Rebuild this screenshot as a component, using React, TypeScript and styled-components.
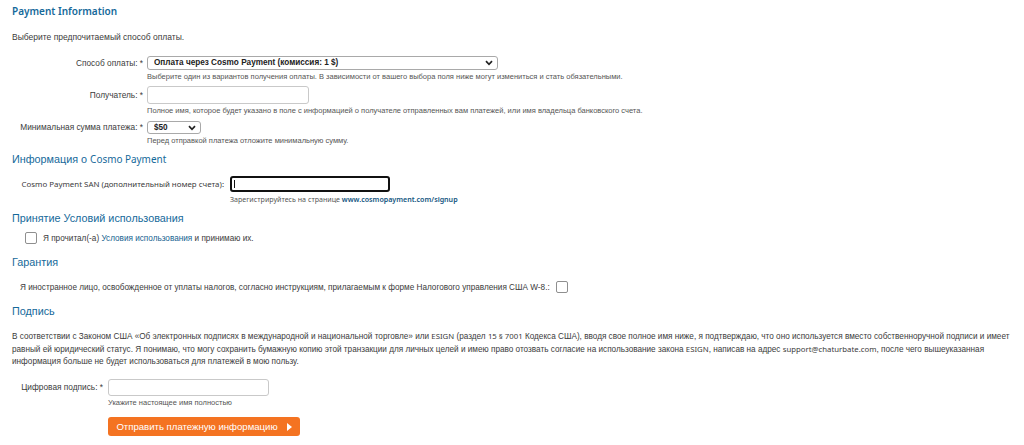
import styled, { createGlobalStyle } from "styled-components";

const GlobalStyle = createGlobalStyle`
  html, body {
    margin: 0;
    padding: 0;
    background: #ffffff;
  }
  body {
    font-family: "Liberation Sans", Arial, sans-serif;
    color: #3b3b3b;
  }
  * {
    box-sizing: border-box;
  }
`;

const blue = "#15699a";

const Page = styled.div`
  padding: 4px 12px 0 12px;
  width: 1024px;
`;

const Title = styled.h1`
  margin: 0;
  height: 14px;
  line-height: 14px;
  font-family: "Noto Sans", sans-serif;
  font-weight: 600;
  font-size: 10px;
  color: ${blue};
`;

const SectionTitle = styled.h2<{ $top: number }>`
  margin: ${(p) => p.$top}px 0 0 0;
  height: 14px;
  line-height: 14px;
  font-weight: 400;
  font-size: 10.8px;
  color: ${blue};
`;

const Latin = styled.span<{ $scale?: number }>`
  font-family: "Noto Sans", sans-serif;
  font-size: ${(p) => p.$scale ?? 0.92}em;
`;

const Intro = styled.p`
  margin: 13px 0 0 0;
  height: 12px;
  line-height: 12px;
  font-size: 8.5px;
`;

const FormRow = styled.div<{ $label: number; $gap: number; $top: number }>`
  display: grid;
  grid-template-columns: ${(p) => p.$label}px auto;
  column-gap: ${(p) => p.$gap}px;
  margin-top: ${(p) => p.$top}px;
  align-items: start;
`;

const Label = styled.label<{ $h: number; $alt?: boolean }>`
  text-align: right;
  white-space: nowrap;
  height: ${(p) => p.$h}px;
  line-height: ${(p) => p.$h}px;
  font-size: ${(p) => (p.$alt ? "7.9px" : "8.3px")};
  font-family: ${(p) =>
    p.$alt ? `"Noto Sans", sans-serif` : `"Liberation Sans", Arial, sans-serif`};
`;

const Control = styled.div`
  display: flex;
  flex-direction: column;
  align-items: flex-start;
`;

const SelectWrap = styled.div<{ $w: number; $h: number }>`
  position: relative;
  width: ${(p) => p.$w}px;
  height: ${(p) => p.$h}px;
`;

const Select = styled.select`
  display: block;
  appearance: none;
  width: 100%;
  height: 100%;
  margin: 0;
  padding: 0 18px 0 6px;
  border: 1px solid #a9a9a9;
  border-radius: 3px;
  background: #ffffff;
  font-family: "Liberation Sans", Arial, sans-serif;
  font-weight: 700;
  font-size: 8.2px;
  color: #222;
  line-height: 12px;
`;

const Chevron = styled.svg`
  position: absolute;
  right: 5px;
  top: 50%;
  width: 8px;
  height: 6px;
  margin-top: -3px;
  pointer-events: none;
`;

const TextInput = styled.input<{ $w: number; $h: number; $focused?: boolean }>`
  display: block;
  width: ${(p) => p.$w}px;
  height: ${(p) => p.$h}px;
  margin: 0;
  padding: 0 4px;
  border: ${(p) => (p.$focused ? "2px solid #111" : "1px solid #c9c9c9")};
  border-radius: 3px;
  background: #fff;
  font-size: 9px;
  outline: none;
`;

const InputWrap = styled.div`
  position: relative;
`;

const Caret = styled.span`
  position: absolute;
  left: 4px;
  top: 4px;
  width: 1px;
  height: 8px;
  background: #111;
`;

const Hint = styled.div<{ $alt?: boolean }>`
  margin-top: 2px;
  height: 10px;
  line-height: 10px;
  white-space: nowrap;
  font-size: ${(p) => (p.$alt ? "7.1px" : "7.5px")};
  font-family: ${(p) =>
    p.$alt ? `"Noto Sans", sans-serif` : `"Liberation Sans", Arial, sans-serif`};
  color: #555;
`;

const HintLink = styled.a`
  color: #13557f;
  font-weight: 600;
  text-decoration: none;
`;

const CheckRow = styled.div<{ $top: number; $indent: number }>`
  display: flex;
  align-items: center;
  gap: 6px;
  margin-top: ${(p) => p.$top}px;
  padding-left: ${(p) => p.$indent}px;
  height: 12px;
  font-size: 8.2px;
  white-space: nowrap;
`;

const Box = styled.span`
  display: inline-block;
  width: 12px;
  height: 12px;
  border: 1px solid #8f8f8f;
  border-radius: 2px;
  background: #fff;
  flex: none;
`;

const InlineLink = styled.a`
  color: #14618f;
  text-decoration: none;
`;

const Legal = styled.p`
  margin: 12px 0 0 0;
  line-height: 12px;
  font-size: 8.2px;
  white-space: nowrap;
`;

const SubmitRow = styled.div`
  margin-top: 8px;
  padding-left: 96px;
`;

const SubmitButton = styled.button`
  display: inline-flex;
  align-items: center;
  justify-content: center;
  gap: 9px;
  width: 192px;
  height: 19px;
  padding: 0;
  border: none;
  border-radius: 3px;
  background: #f47321;
  color: #ffffff;
  font-family: "Liberation Sans", Arial, sans-serif;
  font-size: 9.6px;
  cursor: pointer;
`;

const ChevronDown = () => (
  <Chevron viewBox="0 0 8 6">
    <path d="M1 1.2 L4 4.3 L7 1.2" fill="none" stroke="#222" strokeWidth="1.7" />
  </Chevron>
);

export default function App() {
  return (
    <>
      <GlobalStyle />
      <Page>
        <Title>Payment Information</Title>
        <Intro>Выберите предпочитаемый способ оплаты.</Intro>

        <FormRow $label={131} $gap={4} $top={13}>
          <Label $h={14}>Способ оплаты: *</Label>
          <Control>
            <SelectWrap $w={351} $h={14}>
              <Select defaultValue="cosmo">
                <option value="cosmo">Оплата через Cosmo Payment (комиссия: 1 $)</option>
              </Select>
              <ChevronDown />
            </SelectWrap>
            <Hint>
              Выберите один из вариантов получения оплаты. В зависимости от вашего выбора поля ниже
              могут измениться и стать обязательными.
            </Hint>
          </Control>
        </FormRow>

        <FormRow $label={131} $gap={4} $top={4}>
          <Label $h={18}>Получатель: *</Label>
          <Control>
            <TextInput $w={162} $h={18} />
            <Hint>
              Полное имя, которое будет указано в поле с информацией о получателе отправленных вам
              платежей, или имя владельца банковского счета.
            </Hint>
          </Control>
        </FormRow>

        <FormRow $label={131} $gap={4} $top={5}>
          <Label $h={13}>Минимальная сумма платежа: *</Label>
          <Control>
            <SelectWrap $w={54} $h={13}>
              <Select defaultValue="50">
                <option value="50">$50</option>
              </Select>
              <ChevronDown />
            </SelectWrap>
            <Hint>Перед отправкой платежа отложите минимальную сумму.</Hint>
          </Control>
        </FormRow>

        <SectionTitle $top={6}>
          Информация о <Latin>Cosmo Payment</Latin>
        </SectionTitle>

        <FormRow $label={212} $gap={6} $top={10}>
          <Label $h={16} $alt>
            Cosmo Payment SAN (дополнительный номер счета):
          </Label>
          <Control>
            <InputWrap>
              <TextInput $w={160} $h={16} $focused />
              <Caret />
            </InputWrap>
            <Hint $alt>
              Зарегистрируйтесь на странице <HintLink>www.cosmopayment.com/signup</HintLink>
            </Hint>
          </Control>
        </FormRow>

        <SectionTitle $top={7}>Принятие Условий использования</SectionTitle>
        <CheckRow $top={7} $indent={13}>
          <Box />
          <span>
            Я прочитал(-а) <InlineLink>Условия использования</InlineLink> и принимаю их.
          </span>
        </CheckRow>

        <SectionTitle $top={11}>Гарантия</SectionTitle>
        <CheckRow $top={12} $indent={8}>
          <span>
            Я иностранное лицо, освобожденное от уплаты налогов, согласно инструкциям, прилагаемым к
            форме Налогового управления США W-8.:
          </span>
          <Box />
        </CheckRow>

        <SectionTitle $top={11}>Подпись</SectionTitle>
        <Legal>
          В соответствии с Законом США «Об электронных подписях в международной и национальной
          торговле» или <Latin $scale={0.95}>ESIGN</Latin> (раздел{" "}
          <Latin $scale={0.95}>15 § 7001</Latin> Кодекса США), вводя свое полное имя ниже, я
          подтверждаю, что оно используется вместо собственноручной подписи и имеет
          <br />
          равный ей юридический статус. Я понимаю, что могу сохранить бумажную копию этой транзакции
          для личных целей и имею право отозвать согласие на использование закона{" "}
          <Latin $scale={0.95}>ESIGN</Latin>, написав на адрес{" "}
          <Latin $scale={0.95}>support@chaturbate.com</Latin>, после чего вышеуказанная
          <br />
          информация больше не будет использоваться для платежей в мою пользу.
        </Legal>

        <FormRow $label={91} $gap={5} $top={11}>
          <Label $h={17}>Цифровая подпись: *</Label>
          <Control>
            <TextInput $w={161} $h={17} />
            <Hint>Укажите настоящее имя полностью</Hint>
          </Control>
        </FormRow>

        <SubmitRow>
          <SubmitButton type="button">
            Отправить платежную информацию
            <svg width="5" height="8" viewBox="0 0 5 8">
              <path d="M0 0 L5 4 L0 8 Z" fill="#ffffff" />
            </svg>
          </SubmitButton>
        </SubmitRow>
      </Page>
    </>
  );
}
